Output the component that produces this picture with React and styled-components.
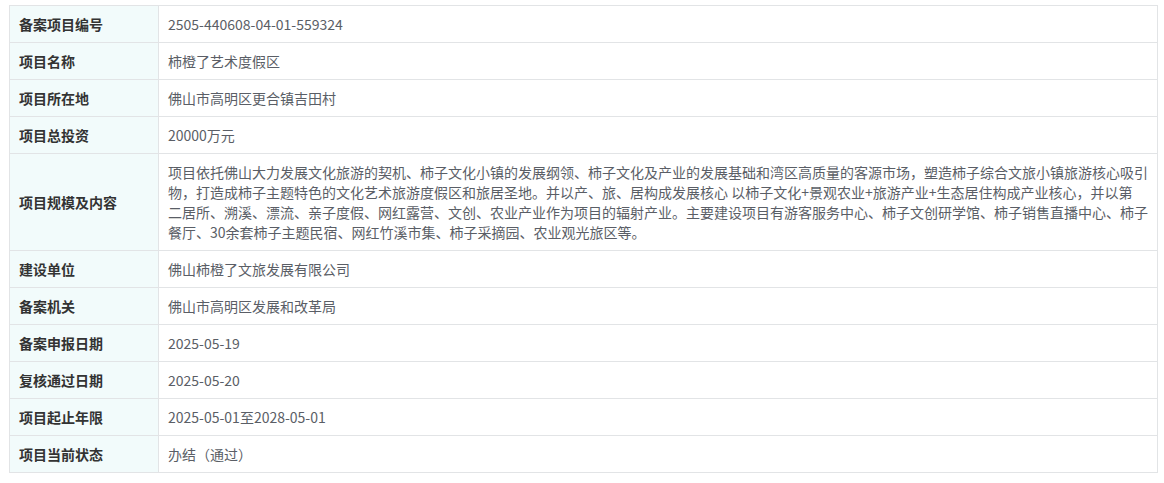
import React from "react";
import styled, { createGlobalStyle } from "styled-components";

const GlobalStyle = createGlobalStyle`
  html, body {
    margin: 0;
    padding: 0;
    background: #ffffff;
  }
  body {
    font-family: "PingFang SC", "Noto Sans CJK SC", "Noto Sans", sans-serif;
  }
`;

const Page = styled.div`
  padding: 5px 6px 10px 9px;
`;

const Grid = styled.div`
  display: grid;
  grid-template-columns: 149px 1fr;
  border-top: 1px solid #e2e4e6;
  border-left: 1px solid #e2e4e6;
`;

const Label = styled.div`
  display: flex;
  align-items: center;
  padding: 8px 9px;
  background: #f2fbfb;
  border-right: 1px solid #e2e4e6;
  border-bottom: 1px solid #e2e4e6;
  font-size: 14px;
  line-height: 20px;
  font-weight: 700;
  color: #333333;
  white-space: nowrap;
`;

const Value = styled.div`
  padding: 8px 9px;
  border-right: 1px solid #e2e4e6;
  border-bottom: 1px solid #e2e4e6;
  font-size: 14px;
  line-height: 20px;
  color: #5a5e66;
  min-width: 0;
`;

const Line = styled.span`
  display: block;
  white-space: nowrap;
`;

const rows = [
  ["备案项目编号", "2505-440608-04-01-559324"],
  ["项目名称", "柿橙了艺术度假区"],
  ["项目所在地", "佛山市高明区更合镇吉田村"],
  ["项目总投资", "20000万元"],
  [
    "项目规模及内容",
    [
      "项目依托佛山大力发展文化旅游的契机、柿子文化小镇的发展纲领、柿子文化及产业的发展基础和湾区高质量的客源市场，塑造柿子综合文旅小镇旅游核心吸引",
      "物，打造成柿子主题特色的文化艺术旅游度假区和旅居圣地。并以产、旅、居构成发展核心 以柿子文化+景观农业+旅游产业+生态居住构成产业核心，并以第",
      "二居所、溯溪、漂流、亲子度假、网红露营、文创、农业产业作为项目的辐射产业。主要建设项目有游客服务中心、柿子文创研学馆、柿子销售直播中心、柿子",
      "餐厅、30余套柿子主题民宿、网红竹溪市集、柿子采摘园、农业观光旅区等。",
    ],
  ],
  ["建设单位", "佛山柿橙了文旅发展有限公司"],
  ["备案机关", "佛山市高明区发展和改革局"],
  ["备案申报日期", "2025-05-19"],
  ["复核通过日期", "2025-05-20"],
  ["项目起止年限", "2025-05-01至2028-05-01"],
  ["项目当前状态", "办结（通过）"],
];

export default function App() {
  return (
    <Page>
      <GlobalStyle />
      <Grid>
        {rows.map(([label, value]) => (
          <React.Fragment key={label}>
            <Label>{label}</Label>
            <Value>
              {Array.isArray(value)
                ? value.map((l, i) => <Line key={i}>{l}</Line>)
                : value}
            </Value>
          </React.Fragment>
        ))}
      </Grid>
    </Page>
  );
}
